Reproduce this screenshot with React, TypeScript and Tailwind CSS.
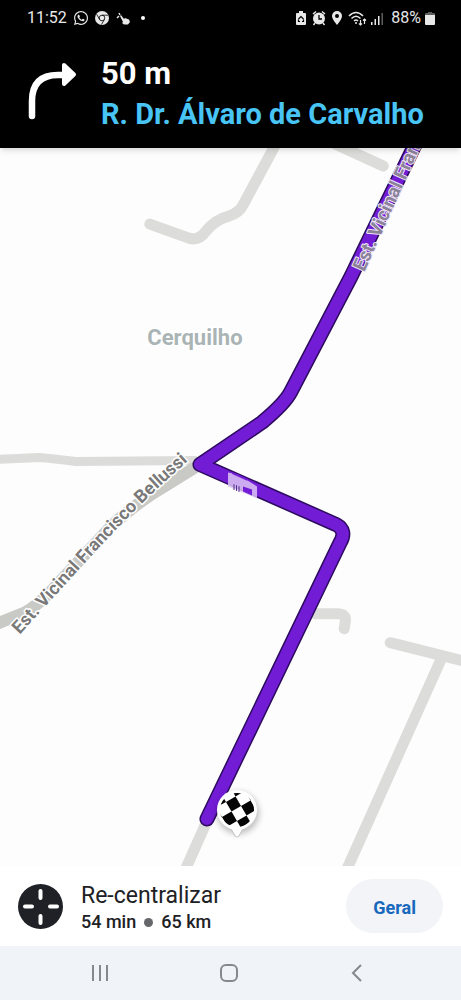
import { FaWhatsapp } from 'react-icons/fa';

const StatusBar = () => {
  return (
    <div className="flex items-center justify-between pt-2 pl-[27px] pr-[26px] h-7 text-base leading-5 text-[#e8e8e8]">
      <div className="flex items-center gap-1.5">
        <span>11:52</span>
        <FaWhatsapp className="size-4" />
        <svg className="size-3.5" viewBox="0 0 14 14" fill="none" stroke="#000">
          <circle cx="7" cy="7" r="7" fill="currentColor" stroke="none" />
          <circle cx="7" cy="7" r="2.8" strokeWidth=".8" />
          <path d="M7 4.200h6M4.600 8.400 1.600 3.200M9.400 8.400 6.500 13.500" strokeWidth=".8" />
        </svg>
        <svg className="size-4" viewBox="0 0 16 16" fill="currentColor">
          <path d="M6 5 9 9l1-1 4 1.500 1 2.500-2 2.500H9L7 13l1-1-3-6Z" />
          <path d="m2 8 2-2M4 3l1 2" stroke="currentColor" strokeWidth="1.500" />
        </svg>
        <span className="size-1 rounded-full bg-white ml-1" />
      </div>
      <div className="flex items-center gap-1">
        <svg className="w-3 h-4" viewBox="0 0 12 16" fill="currentColor">
          <path d="M4 1h4v2h2q1 0 1 1v10q0 1-1 1H2q-1 0-1-1V4q0-1 1-1h2Z" />
          <path d="M3.500 9 6 6.500 8.500 9M3.500 9.500v2H5M8.500 9.500v2H7" fill="none" stroke="#000" strokeWidth="1.200" />
        </svg>
        <svg className="size-4" viewBox="0 0 16 16">
          <circle cx="8" cy="8.500" r="6" fill="currentColor" />
          <path d="m2 4 3-2.500M14 4l-3-2.500M4 13l-1.500 2M12 13l1.500 2" stroke="currentColor" strokeWidth="1.500" />
          <path d="M8 5v4h3" fill="none" stroke="#000" strokeWidth="1.300" />
        </svg>
        <svg className="w-3 h-4" viewBox="0 0 12 16" fill="currentColor">
          <path fillRule="evenodd" d="M6 1a5 5 0 0 1 5 5q0 3-5 9-5-6-5-9a5 5 0 0 1 5-5Zm0 3a2 2 0 1 0 0 4 2 2 0 0 0 0-4Z" />
        </svg>
        <svg className="w-5 h-4" viewBox="0 0 20 16" fill="none" stroke="currentColor" strokeWidth="1.500">
          <path d="M2 6Q9-1 16 6M4.500 8.500Q9 4 13.500 8.500M7 11q2-2 4 0" />
          <circle cx="9" cy="13" r="1" fill="currentColor" stroke="none" />
          <path d="M13.500 10v5M12 13.500l1.500 1.500 1.500-1.500M17.500 14V9M16 10.500 17.500 9l1.500 1.500" strokeWidth="1.200" />
        </svg>
        <svg className="w-3 h-4" viewBox="0 0 12 16" fill="currentColor">
          <path d="M0 12h1.500v3H0zM3.500 9H5v6H3.500zM7 6h1.500v9H7z" />
          <path d="M10.500 3H12v12h-1.500z" opacity=".4" />
        </svg>
        <span className="ml-1">88%</span>
        <svg className="w-2.5 h-4" viewBox="0 0 10 16" fill="currentColor">
          <path d="M3 2h4v1h2q1 0 1 1v2H0V4q0-1 1-1h2Z" opacity=".4" />
          <path d="M0 5h10v9q0 1-1 1H1q-1 0-1-1Z" />
        </svg>
      </div>
    </div>
  );
};

const TurnHeader = () => {
  return (
    <header className="bg-black shadow-md relative">
      <StatusBar />
      <div className="flex items-start gap-6 pl-[27px] pr-3 pt-7 pb-3">
        <svg className="w-[50px] h-14 mt-2 shrink-0 overflow-visible" viewBox="0 0 50 56" fill="none" stroke="#fff">
          <path d="M5 52V37Q5 11 31 11h5" strokeWidth="6.500" strokeLinecap="round" />
          <path d="M37 1v19L47 10.500Z" fill="#fff" strokeWidth="4" strokeLinejoin="round" />
        </svg>
        <div>
          <p className="text-[31px] leading-9 font-bold text-white">50 m</p>
          <h1 className="text-[29px] leading-11 font-bold text-[#48c4f5]">R. Dr. Álvaro de Carvalho</h1>
        </div>
      </div>
    </header>
  );
};

// positions of the dark squares on the flag, in cells from the middle one
const flagCells = [
  [-2, -2], [0, -2], [-1, -1], [1, -1], [-2, 0], [0, 0], [2, 0], [-1, 1], [1, 1], [0, 2], [2, -2], [-2, 2],
];

const DestinationPin = () => {
  return (
    <g>
      <circle cx="238" cy="812" r="21" fill="#000" opacity=".25" filter="url(#soft)" />
      <path d="M229 824h16l-6 11q-2 2-4 0Z" fill="#fff" stroke="#c4c4c4" strokeWidth="1" />
      <circle cx="237" cy="809" r="20" fill="#fff" />
      <g clipPath="url(#flag)">
        <g transform="translate(233.500 803) rotate(-30)">
          {flagCells.map(([x, y]) => (
            <rect key={`${x},${y}`} x={x * 11 - 5.5} y={y * 11 - 5.5} width="11" height="11" fill="#050505" />
          ))}
        </g>
      </g>
    </g>
  );
};

const RouteMap = () => {
  const route = 'M418 138 351 276 291 391Q285 403 262 422L200 464 336 524Q347 530 340 542L207 818';

  return (
    <svg
      className="block w-full flex-1 bg-[#fcfdfc]"
      viewBox="0 148 461 717"
      preserveAspectRatio="xMidYMid slice"
      fill="none"
      strokeLinecap="round"
      strokeLinejoin="round"
      role="img"
      aria-label="Mapa da rota"
    >
      <defs>
        <filter id="soft" x="-50%" y="-50%" width="200%" height="200%">
          <feGaussianBlur stdDeviation="3" />
        </filter>
        <clipPath id="flag">
          <circle cx="237" cy="809" r="17" />
        </clipPath>
        <path id="bellussi" d="M20 634 C61 589 101 544 134 511 S172 476 215 435" />
        <path id="bellussi-north" d="M364 272 433 118" />
      </defs>

      <g stroke="#dcddda" strokeWidth="11">
        <path d="M150 224 189 238Q199 241 206 231 216 219 229 216 239 213 243 205L279 138" />
        <path d="M335 144 383 166" />
        <path d="M-5 459 40 457Q52 458 76 461L195 460" strokeWidth="9" />
        <path d="M315 613h22q10 0 8 9l-1 6" />
        <path d="M390 642 470 662M441 658 345 872M207 820 183 874" />
      </g>
      <path d="M-5 624 25 612Q35 607 50 592L112 525Q128 510 150 495L200 464" stroke="#c9cac6" strokeWidth="12" />

      <path d={route} stroke="#2c0a5e" strokeWidth="15" />
      <path d={route} stroke="#731cd6" strokeWidth="12" />

      <path d="M228 472 238 474 257 486V498L228 486Z" fill="#dcc4f5" opacity=".85" />
      <path d="M243 486 252 489V495L243 491Z" fill="#731cd6" />
      <path d="M234 484v5M236.500 485v5M239 486v5" stroke="#54318a" strokeWidth="1" />
      <path d="m233 473 14 6" stroke="#731cd6" strokeWidth="2" />

      <g stroke="#fff" strokeWidth="3" paintOrder="stroke" className="font-bold">
        <text x="195" y="345" textAnchor="middle" fill="#aab4b5" className="text-[22px]">Cerquilho</text>
        <text fill="#797979" className="text-lg">
          <textPath href="#bellussi">Est. Vicinal Francisco Bellussi</textPath>
        </text>
        <text fill="#8b8299" stroke="#eee6f8" strokeWidth="2" className="text-[19px]">
          <textPath href="#bellussi-north">Est. Vicinal Fran</textPath>
        </text>
      </g>

      <DestinationPin />
    </svg>
  );
};

const TripBar = () => {
  return (
    <section className="flex items-center justify-between bg-white px-[18px] py-3">
      <button type="button" className="flex items-center gap-[18px] text-left text-[#202124]">
        <svg className="size-[45px]" viewBox="0 0 45 45">
          <circle cx="22.500" cy="22.500" r="22.500" fill="#202126" />
          <path d="M22.500 7v7M22.500 32v7M7 22.500h7M32 22.500h7" stroke="#fff" strokeWidth="4" strokeLinecap="round" />
        </svg>
        <span className="flex flex-col pt-1">
          <span className="text-[23px] leading-7">Re-centralizar</span>
          <span className="flex items-center gap-2 text-lg leading-6 font-medium">
            54 min
            <span className="size-[9px] rounded-full bg-[#66676a]" />
            65 km
          </span>
        </span>
      </button>
      <button type="button" className="h-[54px] px-[27px] pt-1 rounded-full bg-[#f2f4f8] text-lg font-bold text-[#1868bd]">
        Geral
      </button>
    </section>
  );
};

const SystemNav = () => {
  return (
    <nav className="grid grid-cols-[1fr_58px_1fr] items-center h-[54px] pr-1 bg-[#f0f3f8] text-[#85888c]">
      <button type="button" aria-label="Recentes" className="flex justify-center">
        <svg className="size-5" viewBox="0 0 20 20" fill="none" stroke="currentColor" strokeWidth="2">
          <path d="M3 2v16M10 2v16M17 2v16" />
        </svg>
      </button>
      <button type="button" aria-label="Início" className="flex justify-center">
        <svg className="size-5" viewBox="0 0 20 20" fill="none" stroke="currentColor" strokeWidth="2">
          <rect x="2" y="2" width="16" height="16" rx="5" />
        </svg>
      </button>
      <button type="button" aria-label="Voltar" className="flex justify-center">
        <svg className="size-5" viewBox="0 0 20 20" fill="none" stroke="currentColor" strokeWidth="2">
          <path d="M14 2 6 10l8 8" />
        </svg>
      </button>
    </nav>
  );
};

const App = () => {
  return (
    <main className="flex flex-col min-h-screen bg-white font-['Roboto',sans-serif]">
      <TurnHeader />
      <RouteMap />
      <TripBar />
      <SystemNav />
    </main>
  );
};

export default App;
